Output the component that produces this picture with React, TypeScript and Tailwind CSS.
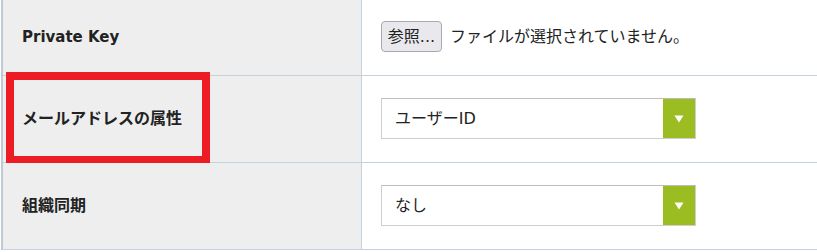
const font = { fontFamily: '"DejaVu Sans", "Noto Sans CJK JP", sans-serif' };

function Select({ value }: { value: string }) {
  return (
    <div className="flex h-[41px] w-[315px] border border-[#cfcfcf] border-t-[#bdbdbd] bg-white">
      <div className="flex flex-1 items-center pl-[13px] text-[16px] text-[#222]">{value}</div>
      <div className="flex w-[32px] items-center justify-center bg-[#9cbd21]">
        <svg width="10" height="8" viewBox="0 0 10 8">
          <path d="M0.5 0.5 L9.5 0.5 L5 7.5 Z" fill="#fff" />
        </svg>
      </div>
    </div>
  );
}

function Row({
  label,
  children,
  mark,
  pad = "pt-[22px] pb-[23px]",
}: {
  label: React.ReactNode;
  children: React.ReactNode;
  mark?: boolean;
  pad?: string;
}) {
  return (
    <div className="flex border-b border-[#c5d1dc]">
      <div className="relative flex w-[358px] items-center bg-[#eeeeee] pl-[19px] text-[16px] font-bold text-[#222]">
        {label}
        {mark && (
          <div className="absolute left-[3px] top-[-4px] h-[92px] w-[204px] border-[8px] border-[#ed1c24]" />
        )}
      </div>
      <div className={`flex flex-1 items-center border-l border-[#c5d1dc] bg-white pl-[19px] ${pad}`}>{children}</div>
    </div>
  );
}

export default function App() {
  return (
    <div className="h-[252px] w-[817px] overflow-hidden bg-white" style={font}>
      <div className="ml-[1px] border-l-2 border-[#bfcad4]">
        <Row label={<span className="text-[15px]">Private Key</span>} pad="pt-[21px] pb-[23px]">
          <div className="flex h-[31px] items-center gap-[8px] text-[16px] text-[#222]">
            <button
              type="button"
              className="h-[31px] w-[61px] rounded-[4px] border border-[#a9a9b3] bg-[#e9e9ed] text-[16px] text-[#222]"
            >
              参照...
            </button>
            <span>ファイルが選択されていません。</span>
          </div>
        </Row>
        <Row label="メールアドレスの属性" mark>
          <Select value="ユーザーID" />
        </Row>
        <Row label="組織同期">
          <Select value="なし" />
        </Row>
      </div>
    </div>
  );
}
